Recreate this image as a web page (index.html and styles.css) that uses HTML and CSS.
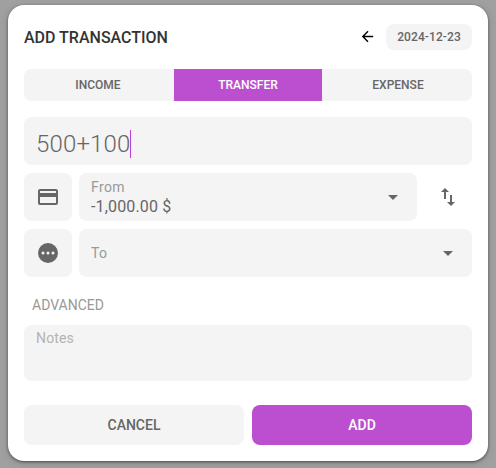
FILE: index.html
```html
<!DOCTYPE html>
<html lang="en">
<head>
<meta charset="utf-8">
<title>Add transaction</title>
<link rel="stylesheet" href="styles.css">
</head>
<body>
<main class="dialog">
  <header class="header">
    <h1 class="title">ADD TRANSACTION</h1>
    <svg class="back" viewBox="0 0 24 24"><path d="M20 11H7.83l5.59-5.59L12 4l-8 8 8 8 1.41-1.41L7.83 13H20z"/></svg>
    <button class="date">2024-12-23</button>
  </header>
  <nav class="tabs">
    <button class="tab">INCOME</button>
    <button class="tab active">TRANSFER</button>
    <button class="tab">EXPENSE</button>
  </nav>
  <div class="amount"><span>500+100</span><i class="caret"></i></div>
  <div class="row">
    <div class="tile"><svg class="icon" viewBox="0 0 24 24"><path d="M20 4H4c-1.110 0-1.990.89-1.990 2L2 18c0 1.110.89 2 2 2h16c1.110 0 2-.89 2-2V6c0-1.110-.89-2-2-2zm0 14H4v-6h16zm0-10H4V6h16z"/></svg></div>
    <div class="select">
      <div class="texts"><span class="label">From</span><span class="value">-1,000.00 $</span></div>
      <svg class="icon" viewBox="0 0 24 24"><path d="M7 10l5 5 5-5z"/></svg>
    </div>
    <button class="swap"><svg class="icon" viewBox="0 0 24 24"><path d="M16 17.010V10h-2v7.010h-3L15 21l4-3.990zM9 3L5 6.990h3V14h2V6.990h3z"/></svg></button>
  </div>
  <div class="row">
    <div class="tile"><svg class="icon" viewBox="0 0 24 24"><path fill-rule="evenodd" d="M12 2a10 10 0 1 0 0 20 10 10 0 0 0 0-20zM7 10.500a1.500 1.500 0 1 1 0 3 1.500 1.500 0 0 1 0-3zm5 0a1.500 1.500 0 1 1 0 3 1.500 1.500 0 0 1 0-3zm5 0a1.500 1.500 0 1 1 0 3 1.500 1.500 0 0 1 0-3z"/></svg></div>
    <div class="select">
      <div class="texts"><span class="label">To</span></div>
      <svg class="icon" viewBox="0 0 24 24"><path d="M7 10l5 5 5-5z"/></svg>
    </div>
  </div>
  <h2 class="section">ADVANCED</h2>
  <div class="notes">Notes</div>
  <footer class="actions">
    <button class="action">CANCEL</button>
    <button class="action primary">ADD</button>
  </footer>
</main>
</body>
</html>
```

FILE: styles.css
```css
* { box-sizing: border-box; }

body {
  margin: 0;
  height: 468px;
  padding: 5px 8px 7px;
  overflow: hidden;
  background: #a0a0a0;
  color: #666;
  font-family: Roboto, "Liberation Sans", sans-serif;
}

button {
  padding: 0;
  border: 0;
  background: #f4f4f4;
  color: #666;
  font: 500 12px/16px Roboto, sans-serif;
}

.dialog {
  height: 456px;
  padding: 16px;
  border-radius: 16px;
  background: #fff;
  box-shadow: 0 1px 3px rgba(0, 0, 0, .5), 0 2px 8px rgba(0, 0, 0, .12);
}

.header {
  display: flex;
  align-items: center;
  height: 32px;
}

.title {
  flex: 1;
  margin: 0;
  color: #333;
  font-size: 16px;
  font-weight: 500;
}

.back {
  width: 17px;
  height: 17px;
  margin-right: 10px;
  margin-bottom: 1px;
  fill: #000;
}

.date {
  width: 86px;
  height: 26px;
  border-radius: 8px;
  letter-spacing: .1px;
}

.tabs {
  display: flex;
  height: 32px;
  margin-top: 16px;
  border-radius: 8px;
  overflow: hidden;
  background: #f4f4f4;
}

.tab { width: 148px; flex: 0 0 148px; }
.tab:first-child, .tab:last-child { width: 150px; flex-basis: 150px; }
.active { background: #bc4fcf; color: #fff; }
.tab:first-child { padding-right: 2px; }
.tab:last-child { padding-left: 2px; }

.amount {
  display: flex;
  align-items: center;
  height: 48px;
  margin-top: 16px;
  padding: 5px 12px 0;
  border-radius: 8px;
  background: #f4f4f4;
  font-size: 24px;
  font-weight: 300;
  letter-spacing: .15px;
}

.caret { width: 1px; height: 28px; background: #bf40d8; }

.row { display: flex; height: 48px; margin-top: 8px; }

.tile {
  display: grid;
  place-items: center;
  width: 48px;
  margin-right: 7px;
  border-radius: 8px;
  background: #f4f4f4;
}

.icon { width: 24px; height: 24px; fill: #666; }

.select {
  display: flex;
  flex: 1;
  align-items: center;
  padding: 0 12px;
  border-radius: 8px;
  background: #f4f4f4;
}

.texts { display: flex; flex: 1; flex-direction: column; }
.label { color: #999; font-size: 14px; line-height: 18px; letter-spacing: .4px; }
.value { padding-top: 1px; font-size: 16px; line-height: 19px; letter-spacing: .15px; }

.swap {
  display: grid;
  place-items: center;
  width: 48px;
  margin-left: 7px;
  background: none;
}

.section {
  margin: 20px 8px 0;
  color: #999;
  font-size: 14px;
  font-weight: 400;
  line-height: 16px;
}

.notes {
  height: 56px;
  margin-top: 12px;
  padding: 4px 12px;
  border-radius: 8px;
  background: #f4f4f4;
  color: #b3b3b3;
  font-size: 14px;
  line-height: 18px;
  letter-spacing: .15px;
}

.actions { display: flex; gap: 8px; margin-top: 24px; }
.action { flex: 1; height: 40px; border-radius: 8px; font-size: 14px; }
.primary { background: #bc4fcf; color: #fff; }
```
